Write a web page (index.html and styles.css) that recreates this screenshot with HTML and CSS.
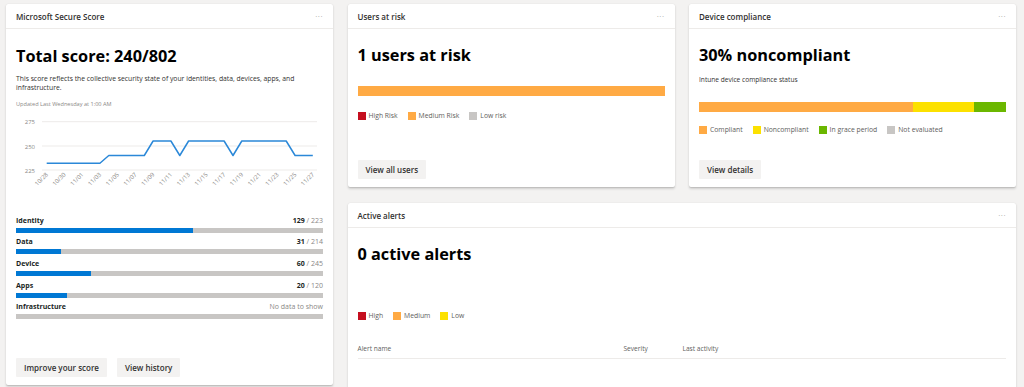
FILE: index.html
```html
<!DOCTYPE html>
<html lang="en">
<head>
    <meta charset="UTF-8">
    <title>Security overview</title>
    <link rel="stylesheet" href="styles.css">
</head>
<body>

<div class="dashboard">

    <!-- Secure score -->
    <section class="card score-card">
        <div class="card-header"><span>Microsoft Secure Score</span><span class="more">···</span></div>
        <div class="card-body">
            <h2 class="big">Total score: 240/802</h2>
            <p class="desc">This score reflects the collective security state of your identities, data, devices, apps, and infrastructure.</p>
            <p class="updated">Updated Last Wednesday at 1:00 AM</p>
            <svg class="chart" width="307" height="90" viewBox="0 0 307 90">
                <g class="grid">
                    <line x1="26" y1="9.7" x2="301" y2="9.7"/>
                    <line x1="26" y1="34" x2="301" y2="34"/>
                    <line x1="26" y1="58" x2="301" y2="58"/>
                </g>
                <g class="ylabels">
                    <text x="19" y="12">275</text>
                    <text x="19" y="36.5">250</text>
                    <text x="19" y="60.5">225</text>
                </g>
                <polyline class="line" points="30.7,51.2 83.9,51.2 92.8,43.5 128.3,43.5 137.1,29 154.9,29 163.8,43.5 172.6,29 208.1,29 217,43.5 225.8,29 270.2,29 279.1,43.5 296.8,43.5"/>
                <g class="xlabels">
                    <text transform="translate(32.5 63) rotate(-45)">10/28</text>
                    <text transform="translate(50.2 63) rotate(-45)">10/30</text>
                    <text transform="translate(68 63) rotate(-45)">11/01</text>
                    <text transform="translate(85.7 63) rotate(-45)">11/03</text>
                    <text transform="translate(103.5 63) rotate(-45)">11/05</text>
                    <text transform="translate(121.2 63) rotate(-45)">11/07</text>
                    <text transform="translate(138.9 63) rotate(-45)">11/09</text>
                    <text transform="translate(156.7 63) rotate(-45)">11/11</text>
                    <text transform="translate(174.4 63) rotate(-45)">11/13</text>
                    <text transform="translate(192.2 63) rotate(-45)">11/15</text>
                    <text transform="translate(209.9 63) rotate(-45)">11/17</text>
                    <text transform="translate(227.6 63) rotate(-45)">11/19</text>
                    <text transform="translate(245.4 63) rotate(-45)">11/21</text>
                    <text transform="translate(263.1 63) rotate(-45)">11/23</text>
                    <text transform="translate(280.9 63) rotate(-45)">11/25</text>
                    <text transform="translate(298.6 63) rotate(-45)">11/27</text>
                </g>
            </svg>

            <div class="categories">
                <div class="cat">
                    <div class="cat-top"><b>Identity</b><span class="cat-value"><b>129</b> / 223</span></div>
                    <div class="track"><div class="fill" style="width: 57.8%"></div></div>
                </div>
                <div class="cat">
                    <div class="cat-top"><b>Data</b><span class="cat-value"><b>31</b> / 214</span></div>
                    <div class="track"><div class="fill" style="width: 14.5%"></div></div>
                </div>
                <div class="cat">
                    <div class="cat-top"><b>Device</b><span class="cat-value"><b>60</b> / 245</span></div>
                    <div class="track"><div class="fill" style="width: 24.5%"></div></div>
                </div>
                <div class="cat">
                    <div class="cat-top"><b>Apps</b><span class="cat-value"><b>20</b> / 120</span></div>
                    <div class="track"><div class="fill" style="width: 16.7%"></div></div>
                </div>
                <div class="cat">
                    <div class="cat-top"><b>Infrastructure</b><span class="cat-value">No data to show</span></div>
                    <div class="track"></div>
                </div>
            </div>

            <div class="actions">
                <button>Improve your score</button>
                <button>View history</button>
            </div>
        </div>
    </section>

    <!-- Users at risk -->
    <section class="card">
        <div class="card-header"><span>Users at risk</span><span class="more">···</span></div>
        <div class="card-body">
            <h2 class="big">1 users at risk</h2>
            <div class="stack users-bar">
                <div class="seg orange" style="width: 100%"></div>
            </div>
            <div class="legend users-legend">
                <span class="key"><i class="red"></i>High Risk</span>
                <span class="key"><i class="orange"></i>Medium Risk</span>
                <span class="key"><i class="grey"></i>Low risk</span>
            </div>
            <div class="actions">
                <button>View all users</button>
            </div>
        </div>
    </section>

    <!-- Device compliance -->
    <section class="card">
        <div class="card-header"><span>Device compliance</span><span class="more">···</span></div>
        <div class="card-body">
            <h2 class="big">30% noncompliant</h2>
            <p class="sub">Intune device compliance status</p>
            <div class="stack device-bar">
                <div class="seg orange" style="width: 69.8%"></div>
                <div class="seg yellow" style="width: 19.9%"></div>
                <div class="seg green" style="width: 10.3%"></div>
            </div>
            <div class="legend device-legend">
                <span class="key"><i class="orange"></i>Compliant</span>
                <span class="key"><i class="yellow"></i>Noncompliant</span>
                <span class="key"><i class="green"></i>In grace period</span>
                <span class="key"><i class="grey"></i>Not evaluated</span>
            </div>
            <div class="actions">
                <button>View details</button>
            </div>
        </div>
    </section>

    <!-- Active alerts -->
    <section class="card alerts-card">
        <div class="card-header"><span>Active alerts</span><span class="more">···</span></div>
        <div class="card-body">
            <h2 class="big">0 active alerts</h2>
            <div class="legend alerts-legend">
                <span class="key"><i class="red"></i>High</span>
                <span class="key"><i class="orange"></i>Medium</span>
                <span class="key"><i class="yellow"></i>Low</span>
            </div>
            <div class="alerts-table">
                <span>Alert name</span>
                <span>Severity</span>
                <span>Last activity</span>
            </div>
        </div>
    </section>

</div>

</body>
</html>
```

FILE: styles.css
```css
/* Page */
body {
    margin: 0;
    background: #f3f2f1;
    font-family: 'Open Sans', 'Noto Sans', sans-serif;
    color: #323130;
    overflow: hidden;
}

.dashboard {
    display: grid;
    grid-template-columns: repeat(3, 327px);
    grid-template-rows: 183px 200px;
    column-gap: 14.5px;
    row-gap: 16px;
    padding: 4px 0 0 6px;
}

/* Cards */
.card {
    background: #fff;
    border-radius: 2px;
    box-shadow: 0 1.2px 2.6px rgba(0, 0, 0, 0.14), 0 0.3px 0.9px rgba(0, 0, 0, 0.1);
    display: flex;
    flex-direction: column;
    min-height: 0;
}

.score-card {
    grid-row: 1 / span 2;
    align-self: start;
    height: 381px;
}

.alerts-card {
    grid-column: 2 / span 2;
}

.card-header {
    height: 24px;
    border-bottom: 1px solid #edebe9;
    padding: 0 10px;
    display: flex;
    align-items: center;
    justify-content: space-between;
    font-size: 8px;
    font-weight: 600;
    color: #323130;
}

.more {
    color: #a19f9d;
    font-weight: 400;
    font-size: 8px;
    letter-spacing: 0.5px;
    margin-top: -1px;
}

.card-body {
    flex: 1;
    display: flex;
    flex-direction: column;
    padding: 0 10px 8px;
}

.big {
    margin: 14px 0 0;
    font-size: 16.3px;
    line-height: 24px;
    font-weight: 700;
    color: #000;
}

.score-card .big {
    margin-top: 15px;
}

.desc {
    margin: 7px 0 0;
    font-size: 6.8px;
    line-height: 8.5px;
    color: #323130;
    padding-right: 20px;
}

.updated {
    margin: 8px 0 0;
    font-size: 5.6px;
    line-height: 8px;
    color: #8a8886;
}

.sub {
    margin: 7.5px 0 0;
    font-size: 6.6px;
    line-height: 9px;
    color: #323130;
}

/* Chart */
.chart {
    display: block;
    margin-top: 4px;
}

.chart .grid line {
    stroke: #edebe9;
    stroke-width: 1;
}

.chart .line {
    fill: none;
    stroke: #2b88d8;
    stroke-width: 1.5;
    stroke-linejoin: round;
}

.chart text {
    font-family: 'Open Sans', sans-serif;
    font-size: 6px;
    fill: #8a8886;
}

.chart .ylabels text {
    text-anchor: end;
}

.chart .xlabels text {
    text-anchor: end;
}

/* Score categories */
.categories {
    margin-top: 13.5px;
}

.cat {
    display: flex;
    flex-direction: column;
    gap: 2px;
    margin-bottom: 4.7px;
}

.cat-top {
    display: flex;
    justify-content: space-between;
    font-size: 7px;
    line-height: 10px;
}

.cat-top b {
    font-weight: 700;
    color: #201f1e;
}

.cat-value {
    color: #8a8886;
}

.track {
    height: 5px;
    background: #c8c6c4;
}

.fill {
    height: 100%;
    background: #0078d4;
}

/* Buttons */
.actions {
    margin-top: auto;
    display: flex;
    gap: 10px;
}

button {
    height: 19px;
    padding: 0 8px;
    border: none;
    border-radius: 1px;
    background: #f3f2f1;
    font-family: 'Open Sans', sans-serif;
    font-size: 8px;
    font-weight: 600;
    color: #323130;
    cursor: pointer;
}

/* Stacked bars and legends */
.stack {
    display: flex;
    height: 10px;
}

.users-bar {
    margin-top: 19px;
}

.device-bar {
    margin-top: 18.5px;
}

.seg.orange { background: #ffaa44; }
.seg.yellow { background: #fce100; }
.seg.green { background: #6bb700; }

.legend {
    display: flex;
    gap: 10px;
    font-size: 6.8px;
    line-height: 10px;
    color: #605e5c;
}

.users-legend {
    margin-top: 15px;
}

.device-legend {
    margin-top: 13px;
}

.alerts-legend {
    margin-top: 44.5px;
}

.key {
    display: flex;
    align-items: center;
    gap: 3px;
}

.key i {
    width: 8px;
    height: 8px;
    display: inline-block;
}

.key i.red { background: #c50f1f; }
.key i.orange { background: #ffaa44; }
.key i.yellow { background: #fce100; }
.key i.green { background: #6bb700; }
.key i.grey { background: #c8c6c4; }

/* Alerts table */
.alerts-table {
    margin-top: 23.5px;
    display: grid;
    grid-template-columns: 266px 59px 1fr;
    font-size: 6.6px;
    line-height: 10px;
    color: #605e5c;
    padding-bottom: 4px;
    border-bottom: 1px solid #edebe9;
}
```
